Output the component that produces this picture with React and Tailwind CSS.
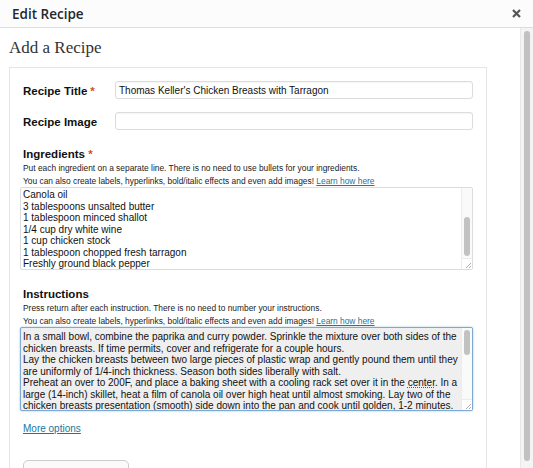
import React from 'react';

const ingredients = [
    'Canola oil',
    '3 tablespoons unsalted butter',
    '1 tablespoon minced shallot',
    '1/4 cup dry white wine',
    '1 cup chicken stock',
    '1 tablespoon chopped fresh tarragon',
    'Freshly ground black pepper',
];

const Help = ({ first }) => (
    <div className="text-[8.4px] leading-[12.5px] text-[#222]">
        <div>{first}</div>
        <div>
            You can also create labels, hyperlinks, bold/italic effects and even add images!{' '}
            <a className="text-[#21759b] underline">Learn how here</a>
        </div>
    </div>
);

// fake textarea scrollbar + resize corner
const TextScroll = ({ thumbTop, thumbH }) => (
    <div className="w-[11px] flex flex-col border-l border-[#ececec] bg-[#fafafa]">
        <div className="flex-1 relative">
            <div className="absolute left-[2px] w-[6px] rounded-full bg-[#c2c2c2]" style={{ top: thumbTop, height: thumbH }} />
        </div>
        <div className="h-[11px] border-t border-[#ececec] bg-white flex items-end justify-end">
            <svg width="8" height="8" viewBox="0 0 8 8">
                <path d="M7 2 L2 7 M7 5 L5 7" stroke="#999" strokeWidth="0.8" />
            </svg>
        </div>
    </div>
);

const Field = ({ label, value }) => (
    <div className="flex items-center h-[18px]">
        <div className="w-[92px] pt-[2px] leading-[14px] text-[11.5px] font-bold text-[#111]">
            {label}
            {label === 'Recipe Title' && <span className="text-[#d54e21] ml-[3px]">*</span>}
        </div>
        <div className="flex-1 h-[18px] border border-[#dcdcdc] rounded-[3px] bg-white px-[3px] flex items-center text-[10px] text-[#111] shadow-[inset_0_1px_1px_rgba(0,0,0,0.04)]">
            {value}
        </div>
    </div>
);

export default function App() {
    return (
        <div className="w-[533px] h-[468px] overflow-hidden bg-white flex flex-col font-['Liberation_Sans',Arial,sans-serif]">
            {/* Modal header */}
            <div className="h-[28px] shrink-0 bg-[#fcfcfc] border-b border-[#dedede] flex items-center justify-between pl-[12px] pr-[12px]">
                <span className="pt-[1px] font-['Open_Sans',sans-serif] font-semibold text-[13.5px] text-[#23282d]">Edit Recipe</span>
                <svg width="9" height="9" viewBox="0 0 9 9">
                    <path d="M1 1 L8 8 M8 1 L1 8" stroke="#555" strokeWidth="2.2" />
                </svg>
            </div>

            <div className="flex flex-1 min-h-0">
                <div className="flex-1 min-w-0 pl-[9px] pr-[33px]">
                    <h1 className="mt-[10px] h-[29px] font-['Liberation_Serif',serif] text-[17px] leading-[20px] text-[#333]">Add a Recipe</h1>

                    {/* Recipe card */}
                    <div className="border border-[#e5e5e5] px-[10px] pt-[13px] h-[500px]">
                        <div className="pl-[3px] pr-[3px]">
                            <Field label="Recipe Title" value="Thomas Keller's Chicken Breasts with Tarragon" />
                            <div className="mt-[13px]">
                                <Field label="Recipe Image" value="" />
                            </div>
                        </div>

                        <div className="mt-[17px] pl-[3px] text-[11.5px] font-bold leading-[14px] text-[#111]">
                            Ingredients <span className="text-[#d54e21]">*</span>
                        </div>
                        <div className="pl-[3px] mt-[1px]">
                            <Help first="Put each ingredient on a separate line. There is no need to use bullets for your ingredients." />
                        </div>
                        <div className="h-[83px] mr-[3px] border border-[#dcdcdc] rounded-[2px] flex overflow-hidden">
                            <div className="flex-1 pl-[2px] pt-[1px] text-[10px] leading-[11.5px] text-[#111]">
                                {ingredients.map((line) => (
                                    <div key={line}>{line}</div>
                                ))}
                            </div>
                            <TextScroll thumbTop={29} thumbH={39} />
                        </div>

                        <div className="mt-[17px] pl-[3px] text-[11.5px] font-bold leading-[14px] text-[#111]">Instructions</div>
                        <div className="pl-[3px] mt-[1px]">
                            <Help first="Press return after each instruction. There is no need to number your instructions." />
                        </div>
                        <div className="h-[84px] mr-[3px] border border-[#7ea9d4] rounded-[2px] flex overflow-hidden bg-[#efefef] shadow-[0_0_2px_rgba(30,140,190,0.5)]">
                            <div className="flex-1 pl-[2px] pt-[3px] text-[10px] leading-[11.5px] text-[#111] whitespace-nowrap">
                                <div>In a small bowl, combine the paprika and curry powder. Sprinkle the mixture over both sides of the</div>
                                <div>chicken breasts. If time permits, cover and refrigerate for a couple hours.</div>
                                <div>Lay the chicken breasts between two large pieces of plastic wrap and gently pound them until they</div>
                                <div>are uniformly of 1/4-inch thickness. Season both sides liberally with salt.</div>
                                <div>
                                    Preheat an over to 200F, and place a baking sheet with a cooling rack set over it in the{' '}
                                    <span className="underline decoration-dotted decoration-[#e02020]">center</span>. In a
                                </div>
                                <div>large (14-inch) skillet, heat a film of canola oil over high heat until almost smoking. Lay two of the</div>
                                <div>chicken breasts presentation (smooth) side down into the pan and cook until golden, 1-2 minutes.</div>
                            </div>
                            <TextScroll thumbTop={2} thumbH={25} />
                        </div>

                        <div className="mt-[12px] pl-[3px] text-[10px] leading-[12px]">
                            <a className="text-[#21759b] underline">More options</a>
                        </div>

                        <div className="mt-[25px] ml-[3px] w-[106px] h-[26px] border border-[#cccccc] rounded-[5px] bg-[#fafafa]" />
                    </div>
                </div>

                {/* page scrollbar */}
                <div className="w-[13px] shrink-0 bg-[#f4f4f4] border-l border-[#e8e8e8] flex justify-center pt-[3px]">
                    <div className="w-[6px] h-[430px] rounded-full bg-[#c1c1c1]" />
                </div>
            </div>
        </div>
    );
}
